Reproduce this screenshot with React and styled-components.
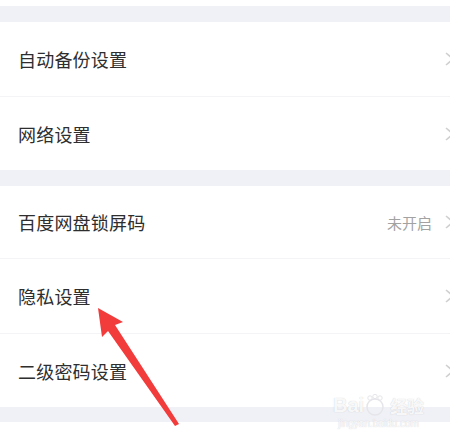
import styled, { createGlobalStyle } from 'styled-components'

const Global = createGlobalStyle`
    html, body {
        margin : 0 ;
        padding : 0 ;
        background : #ffffff ;
    }
    body {
        font-family : "Noto Sans CJK SC", "Noto Sans", sans-serif ;
    }
`

const Page = styled.div`
    position : relative ;
    width : 450px ;
    height : 447px ;
    overflow : hidden ;
    background : #ffffff ;
    padding-top : 6px ;
    box-sizing : border-box ;
`

const Gap = styled.div`
    height : ${p => p.h}px ;
    background : #f0f1f6 ;
`

const Group = styled.div`
    display : flex ;
    flex-direction : column ;
    background : #ffffff ;
`

const Row = styled.div`
    display : flex ;
    align-items : center ;
    justify-content : space-between ;
    height : ${p => p.h}px ;
    padding-left : 18px ;
    box-sizing : border-box ;
    border-top : ${p => (p.first ? 'none' : '1px solid #f4f4f6')} ;
`

const Label = styled.span`
    font-size : 18px ;
    color : #2e2e2e ;
    letter-spacing : 0.2px ;
`

const Right = styled.div`
    display : flex ;
    align-items : center ;
    gap : 11px ;
    margin-right : -7px ;
`

const Value = styled.span`
    font-size : 15px ;
    color : #a2a2a2 ;
`

const Chevron = () => (
    <svg width="14" height="16" viewBox="0 0 14 16">
        <path d="M3 2 L10 8 L3 14" fill="none" stroke="#d0d0d3" strokeWidth="1.6" />
    </svg>
)

const Arrow = styled.svg`
    position : absolute ;
    left : 0 ;
    top : 0 ;
    pointer-events : none ;
`

const Mark = styled.div`
    position : absolute ;
    left : 333px ;
    top : 394px ;
    display : flex ;
    flex-direction : column ;
    align-items : center ;
    color : rgba(255, 255, 255, 0.9) ;
    text-shadow : 0 0 1px rgba(160, 160, 170, 0.6) ;
`

const MarkTop = styled.div`
    display : flex ;
    align-items : center ;
    font-family : "Liberation Sans", sans-serif ;
    font-size : 20px ;
    font-weight : bold ;
    line-height : 1 ;
`

const MarkCjk = styled.span`
    font-family : "Noto Sans CJK SC", sans-serif ;
    font-size : 17px ;
    margin-left : 4px ;
`

const MarkSub = styled.div`
    font-family : "Liberation Sans", sans-serif ;
    font-size : 10px ;
    margin-top : 2px ;
`

const items = [
    [{ label: '自动备份设置', h: 74 }, { label: '网络设置', h: 74 }],
    [
        { label: '百度网盘锁屏码', value: '未开启', h: 72 },
        { label: '隐私设置', h: 75 },
        { label: '二级密码设置', h: 74 },
    ],
]

export default function App() {
    return (
        <Page>
            <Global />
            {items.map((group, gi) => (
                <div key={gi}>
                    <Gap h={16} />
                    <Group>
                        {group.map((it, i) => (
                            <Row key={it.label} h={it.h} first={i === 0}>
                                <Label>{it.label}</Label>
                                <Right>
                                    {it.value && <Value>{it.value}</Value>}
                                    <Chevron />
                                </Right>
                            </Row>
                        ))}
                    </Group>
                </div>
            ))}
            <Gap h={15} />
            <Arrow width="450" height="447" viewBox="0 0 450 447">
                <path
                    d="M98 308 L123 322 L115 325 L179 424 L175 426 L108 331 L102 337 Z"
                    fill="#f23b3b"
                />
            </Arrow>
            <Mark>
                <MarkTop>
                    Bai
                    <svg width="22" height="22" viewBox="0 0 22 22">
                        <circle cx="11" cy="13" r="8" fill="none" stroke="#e6e6ea" strokeWidth="1.5" />
                        <circle cx="6" cy="4" r="2.2" fill="none" stroke="#e6e6ea" strokeWidth="1" />
                        <circle cx="11" cy="2.5" r="2.2" fill="none" stroke="#e6e6ea" strokeWidth="1" />
                        <circle cx="16" cy="4" r="2.2" fill="none" stroke="#e6e6ea" strokeWidth="1" />
                    </svg>
                    <MarkCjk>经验</MarkCjk>
                </MarkTop>
                <MarkSub>jingyan.baidu.com</MarkSub>
            </Mark>
        </Page>
    )
}
